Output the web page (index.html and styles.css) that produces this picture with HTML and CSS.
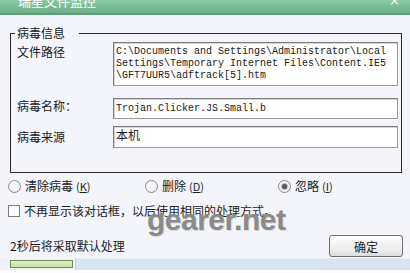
FILE: index.html
```html
<!DOCTYPE html>
<html lang="zh-CN">
<head>
    <meta charset="UTF-8">
    <title>瑞星文件监控</title>
    <link rel="stylesheet" href="styles.css">
</head>
<body>
    <div class="titlebar">
        <span class="title">瑞星文件监控</span>
        <span class="close">×</span>
    </div>

    <div class="content">
        <!-- 病毒信息 -->
        <fieldset class="group">
            <legend>病毒信息</legend>
            <div class="row row-path">
                <span class="label">文件路径</span>
                <div class="box box-path">C:\Documents and Settings\Administrator\Local<br>Settings\Temporary Internet Files\Content.IE5<br>\GFT7UUR5\adftrack[5].htm</div>
            </div>
            <div class="row row-name">
                <span class="label">病毒名称：</span>
                <div class="box box-name">Trojan.Clicker.JS.Small.b</div>
            </div>
            <div class="row row-source">
                <span class="label">病毒来源</span>
                <div class="box box-source">本机</div>
            </div>
        </fieldset>

        <!-- 处理方式 -->
        <div class="choices">
            <label class="choice"><span class="radio"></span>清除病毒 <span class="key">(<u>K</u>)</span></label>
            <label class="choice"><span class="radio"></span>删除 <span class="key">(<u>D</u>)</span></label>
            <label class="choice"><span class="radio checked"></span>忽略 <span class="key">(<u>I</u>)</span></label>
        </div>
        <label class="check"><span class="checkbox"></span>不再显示该对话框，以后使用相同的处理方式。</label>

        <div class="footer">
            <span class="countdown">2秒后将采取默认处理</span>
            <button class="ok-button">确定</button>
        </div>
    </div>

    <div class="statusbar">
        <div class="pane pane-progress"><div class="progress"></div></div>
        <div class="pane pane-rest"></div>
    </div>

    <div class="watermark">gearer.net</div>
</body>
</html>
```

FILE: styles.css
```css
body {
    margin: 0;
    width: 410px;
    height: 273px;
    overflow: hidden;
    position: relative;
    background-color: #f4f5fb;
    font-family: "Noto Sans CJK SC", sans-serif;
    font-size: 12px;
    color: #1a1a1a;
}
.titlebar {
    height: 13px;
    border-bottom: 2px solid #5f9c78;
    background: linear-gradient(to bottom, #8cc9a6, #76b993 60%, #6aae89);
    display: flex;
    justify-content: space-between;
    overflow: hidden;
    color: #fff;
}
.title {
    font-size: 13px;
    line-height: 13px;
    margin: -6px 0 0 18px;
}
.close {
    font-family: "DejaVu Sans", sans-serif;
    font-size: 13px;
    line-height: 13px;
    margin: -6px 10px 0 0;
}
.content {
    padding: 12px 0 0 0;
}
.group {
    box-sizing: border-box;
    width: 392px;
    margin: 0 0 0 10px;
    padding: 3px 3px 24px 6px;
    border: 1px solid #2a2a2a;
    min-inline-size: 0;
}
.group legend {
    padding: 0 14px 0 2px;
    margin-left: -2px;
    line-height: 12px;
}
.row {
    display: grid;
    grid-template-columns: 96px 1fr;
}
.row-name {
    margin-top: 12px;
}
.row-source {
    margin-top: 7px;
    align-items: center;
}
.label {
    line-height: 14px;
}
.row-path .label {
    padding-top: 3px;
}
.row-name .label {
    padding-top: 1px;
}
.box {
    box-sizing: border-box;
    background-color: #fff;
    border: 1px solid #9a9a9a;
    border-top-color: #7c7c7c;
    border-left-color: #7c7c7c;
    box-shadow: inset 1px 1px 0 #d4d4d4;
    padding: 3px 2px 0 2px;
    font-family: "Liberation Mono", monospace;
    font-size: 10px;
    line-height: 12px;
    white-space: nowrap;
}
.box-path {
    height: 44px;
}
.box-name {
    height: 21px;
    padding-top: 4px;
}
.box-source {
    height: 22px;
    padding-top: 1px;
    font-family: "Noto Sans CJK SC", sans-serif;
    font-size: 12px;
    line-height: 14px;
}
.choices {
    display: grid;
    grid-template-columns: 137px 133px 1fr;
    margin-top: 5px;
    padding-left: 8px;
    height: 16px;
    align-items: center;
}
.choice, .check {
    display: flex;
    align-items: center;
    line-height: 16px;
    color: #222;
}
.key {
    font-size: 11px;
    margin-left: 3px;
}
.radio {
    box-sizing: border-box;
    width: 13px;
    height: 13px;
    border: 1px solid #8e8e8e;
    border-radius: 50%;
    background: radial-gradient(circle at 40% 40%, #fff, #e6e6e6);
    margin-right: 4px;
    display: flex;
    align-items: center;
    justify-content: center;
}
.radio.checked::after {
    content: "";
    width: 5px;
    height: 5px;
    border-radius: 50%;
    background-color: #555;
    box-shadow: 0 0 0 1px #b8b8b8;
}
.check {
    margin-top: 9px;
    padding-left: 8px;
}
.checkbox {
    box-sizing: border-box;
    width: 12px;
    height: 12px;
    border: 1px solid #7d7d7d;
    background-color: #fff;
    margin-right: 4px;
}
.footer {
    display: flex;
    justify-content: space-between;
    align-items: center;
    margin-top: 16px;
    padding: 0 7px 0 10px;
}
.countdown {
    line-height: 16px;
}
.ok-button {
    box-sizing: border-box;
    width: 74px;
    height: 22px;
    border: 1px solid #6d6d6d;
    border-radius: 3px;
    background: linear-gradient(to bottom, #fdfdfd, #ececec 70%, #dcdcdc);
    font-family: "Noto Sans CJK SC", sans-serif;
    font-size: 12px;
    color: #1a1a1a;
    padding: 0;
}
.statusbar {
    display: flex;
    margin-top: 1px;
    height: 12px;
    border-bottom: 3px solid #fbfbfd;
}
.pane-progress {
    width: 76px;
    padding: 2px 0 0 10px;
    box-sizing: border-box;
    background-color: #eef1f6;
    border-right: 1px solid #c9d3de;
}
.progress {
    box-sizing: border-box;
    width: 63px;
    height: 8px;
    border: 1px solid #6f8e5c;
    background: linear-gradient(to bottom, #e2f0c4, #c8e29e);
}
.pane-rest {
    flex: 1;
    background-color: #d8e4ef;
    border-top: 1px solid #e6edf4;
}
.watermark {
    position: absolute;
    left: 147px;
    top: 203px;
    font-family: "Liberation Sans", sans-serif;
    font-weight: bold;
    font-size: 30px;
    letter-spacing: -0.5px;
    color: #8a8a8a;
    text-shadow: 1px 1px 0 #d8d8d8;
}
```
